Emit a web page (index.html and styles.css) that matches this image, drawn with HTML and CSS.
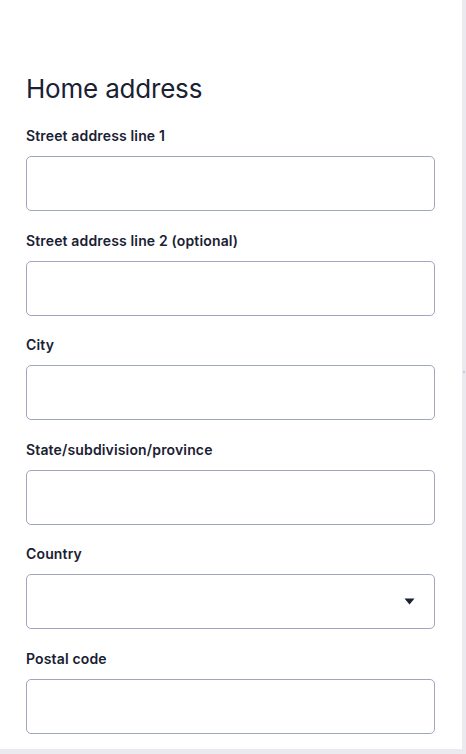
FILE: index.html
```html
<!DOCTYPE html>
<html>
<head>
    <meta charset="UTF-8">
    <title>Home address</title>
    <link rel="stylesheet" href="styles.css">
</head>
<body>
    <div class="panel">
        <h2>Home address</h2>

        <div class="field">
            <label for="line1">Street address line 1</label>
            <input type="text" id="line1">
        </div>

        <div class="field">
            <label for="line2">Street address line 2 (optional)</label>
            <input type="text" id="line2">
        </div>

        <div class="field">
            <label for="city">City</label>
            <input type="text" id="city">
        </div>

        <div class="field">
            <label for="state">State/subdivision/province</label>
            <input type="text" id="state">
        </div>

        <div class="field">
            <label for="country">Country</label>
            <div class="select-wrap">
                <select id="country">
                    <option value=""></option>
                </select>
                <svg class="caret" width="11" height="7" viewBox="0 0 11 7">
                    <path d="M0.5 0.5 H10.5 L5.5 6.5 Z" fill="#1a2133"/>
                </svg>
            </div>
        </div>

        <div class="field">
            <label for="postal">Postal code</label>
            <input type="text" id="postal">
        </div>
    </div>
    <span class="scroll-dot"></span>
</body>
</html>
```

FILE: styles.css
```css
* {
    margin: 0;
    padding: 0;
    box-sizing: border-box;
}

body {
    font-family: Inter, "Noto Sans", sans-serif;
    background: #ebebef;
    color: #1a2133;
    width: 466px;
    height: 754px;
    overflow: hidden;
    position: relative;
}

.panel {
    width: 462px;
    height: 749px;
    background: #ffffff;
    padding: 73px 28px 0 26px;
}

h2 {
    font-size: 26px;
    font-weight: 400;
    line-height: 32px;
    letter-spacing: -0.2px;
    margin-bottom: 21px;
}

.field {
    display: flex;
    flex-direction: column;
    gap: 10px;
    margin-bottom: 19.6px;
}

.field label {
    font-size: 14px;
    font-weight: 600;
    line-height: 20px;
    letter-spacing: 0.15px;
}

.field input,
.field select {
    width: 409px;
    height: 55px;
    border: 1px solid #a0a6bf;
    border-radius: 5px;
    background: #ffffff;
    font-family: inherit;
    font-size: 15px;
    padding: 0 14px;
    color: #1a2133;
    outline: none;
}

.select-wrap {
    position: relative;
}

.field select {
    appearance: none;
    -webkit-appearance: none;
}

.caret {
    position: absolute;
    left: 378px;
    top: 24px;
    pointer-events: none;
}

.scroll-dot {
    position: absolute;
    left: 463px;
    top: 371px;
    width: 2px;
    height: 2px;
    background: #c9c9e6;
}
```
